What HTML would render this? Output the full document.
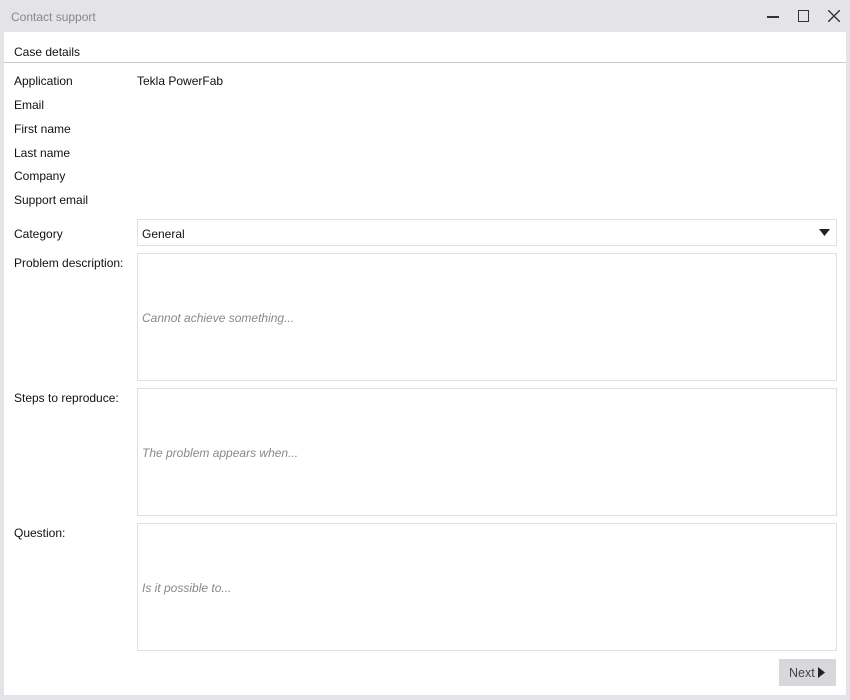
<!DOCTYPE html>
<html><head><meta charset="utf-8"><style>
*{margin:0;padding:0;box-sizing:border-box}
body{width:850px;height:700px;background:#e3e3e8;font-family:"Liberation Sans",sans-serif;font-size:12px;color:#111;position:relative;overflow:hidden}
.title{position:absolute;left:11px;top:10px;color:#888;font-size:12px}
.ctl{position:absolute;top:8px;color:#333}
.content{position:absolute;left:4px;top:32px;width:842px;height:663px;background:#fff}
.tab{position:absolute;left:10px;top:12px}
.sep{position:absolute;left:0;top:30px;width:842px;height:1px;background:#c8c8c8}
.l{position:absolute;left:10px}
.v{position:absolute;left:133px}
.box{position:absolute;left:133px;width:700px;border:1px solid #e0e0e0;background:#fff}
.ph{position:absolute;left:4px;color:#888;font-style:italic}
.btn{position:absolute;left:775px;top:627px;width:57px;height:27px;background:#d8d8dc;color:#444;font-size:12.5px;padding:7px 0 0 10px}
</style></head><body>
<div class="title">Contact support</div>
<div class="ctl" style="left:767px;top:16px;width:12px;height:1.5px;background:#333"></div>
<div class="ctl" style="left:798px;top:10px;width:11px;height:12px;border:1.3px solid #333"></div>
<svg class="ctl" style="left:828px;top:10px" width="12" height="12"><path d="M0 0L12 12M12 0L0 12" stroke="#333" stroke-width="1.4"/></svg>
<div class="content">
<div class="tab" style="top:13px">Case details</div>
<div class="sep"></div>
<div class="l" style="top:42px">Application</div><div class="v" style="top:42px">Tekla PowerFab</div>
<div class="l" style="top:66px">Email</div>
<div class="l" style="top:90px">First name</div>
<div class="l" style="top:114px">Last name</div>
<div class="l" style="top:137px">Company</div>
<div class="l" style="top:161px">Support email</div>
<div class="l" style="top:195px">Category</div>
<div class="box" style="top:187px;height:27px"><span style="position:absolute;left:4px;top:7px">General</span>
<svg style="position:absolute;right:6px;top:9px" width="11" height="8"><path d="M0 0H11L5.5 7Z" fill="#222"/></svg></div>
<div class="l" style="top:224px">Problem description:</div>
<div class="box" style="top:221px;height:128px"><span class="ph" style="top:57px">Cannot achieve something...</span></div>
<div class="l" style="top:359px">Steps to reproduce:</div>
<div class="box" style="top:356px;height:128px"><span class="ph" style="top:57px">The problem appears when...</span></div>
<div class="l" style="top:494px">Question:</div>
<div class="box" style="top:491px;height:128px"><span class="ph" style="top:57px">Is it possible to...</span></div>
<div class="btn">Next <svg width="7" height="11" style="vertical-align:-1px"><path d="M0 0L7 5.5L0 11Z" fill="#222"/></svg></div>
</div>
</body></html>
